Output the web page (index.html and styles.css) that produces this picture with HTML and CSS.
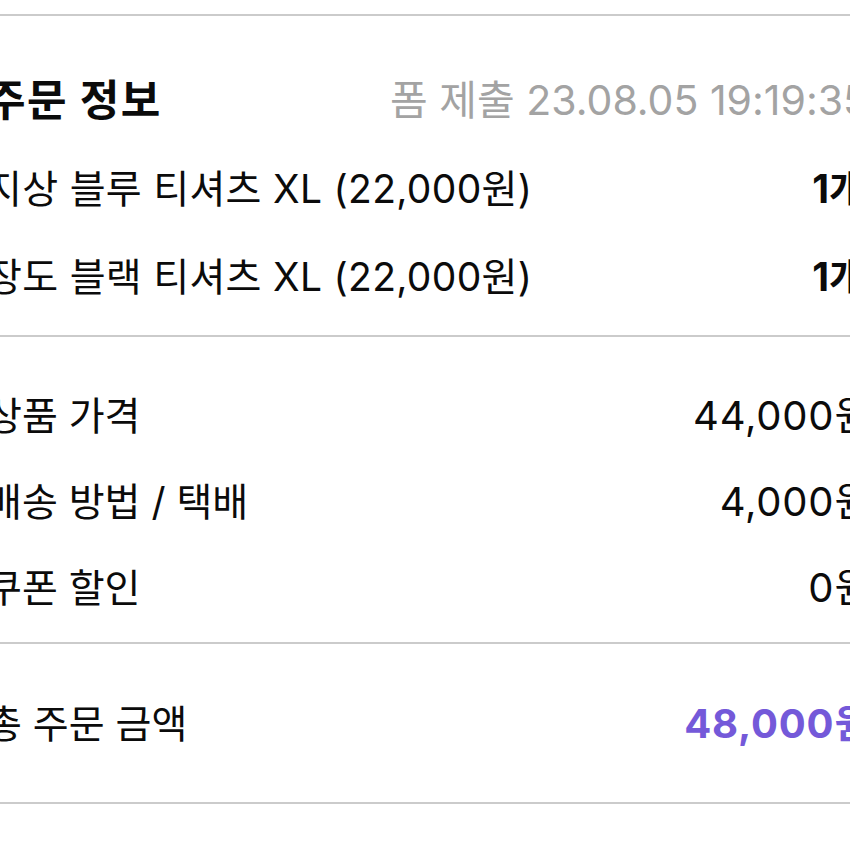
FILE: index.html
```html
<!DOCTYPE html>
<html lang="ko">
<head>
<meta charset="utf-8">
<title>주문 정보</title>
<link rel="stylesheet" href="styles.css">
</head>
<body>
<main class="sheet">
  <div class="rule"></div>
  <section class="section section-items">
    <div class="row header">
      <h2 class="title">주문 정보</h2>
      <span class="stamp">폼 제출 23.08.05 19:19:35</span>
    </div>
    <div class="row">
      <span class="label item">지상 블루 티셔츠 XL (22,000원)</span>
      <span class="qty">1개</span>
    </div>
    <div class="row">
      <span class="label item">장도 블랙 티셔츠 XL (22,000원)</span>
      <span class="qty">1개</span>
    </div>
  </section>
  <div class="rule"></div>
  <section class="section section-costs">
    <div class="row cost">
      <span class="label">상품 가격</span>
      <span class="amount">44,000원</span>
    </div>
    <div class="row cost">
      <span class="label">배송 방법 / 택배</span>
      <span class="amount">4,000원</span>
    </div>
    <div class="row cost">
      <span class="label">쿠폰 할인</span>
      <span class="amount">0원</span>
    </div>
  </section>
  <div class="rule"></div>
  <section class="section section-total">
    <div class="row cost">
      <span class="label">총 주문 금액</span>
      <span class="amount total">48,000원</span>
    </div>
  </section>
  <div class="rule"></div>
</main>
</body>
</html>
```
FILE: styles.css
```css
html, body {
  margin: 0;
  padding: 0;
  background: #ffffff;
  overflow: hidden;
}

body {
  width: 850px;
  height: 850px;
  font-family: Inter, "Noto Sans CJK KR", sans-serif;
  color: #0b0b0b;
}

.sheet {
  margin: 0 -22px 0 -14px;
  width: 886px;
  padding-top: 14px;
}

.rule {
  height: 2px;
  background: #cbcbcb;
}

.section {
  display: flex;
  flex-direction: column;
}

.section-items {
  padding: 41px 0 14px;
}

.section-costs {
  padding: 36px 0 11px;
}

.section-total {
  padding: 37px 0 35px;
}

.row {
  display: flex;
  align-items: center;
  justify-content: space-between;
  height: 88px;
  font-size: 39px;
  line-height: 1.2;
  white-space: nowrap;
}

.row.cost {
  height: 86px;
}

.title {
  margin: 0;
  font-size: 43px;
  font-weight: 700;
  letter-spacing: 1.5px;
}

.stamp {
  margin-right: 4px;
  font-size: 41px;
  color: #a3a3a3;
}

.item {
  letter-spacing: 0.3px;
}

.qty {
  margin-right: 7px;
  font-weight: 700;
}

.amount {
  font-size: 40px;
  letter-spacing: 0.8px;
}

.total {
  font-weight: 700;
  color: #7459d9;
}
```
